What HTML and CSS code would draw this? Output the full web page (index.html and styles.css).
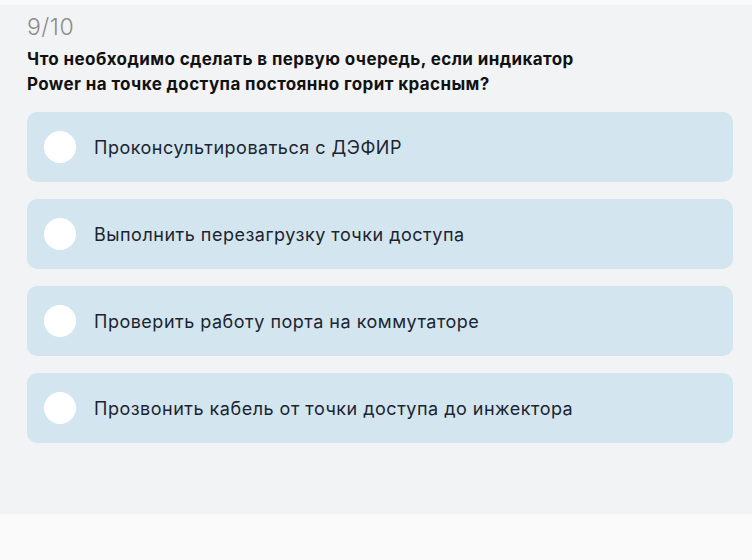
FILE: index.html
```html
<!DOCTYPE html>
<html lang="ru">
<head>
    <meta charset="UTF-8">
    <meta name="viewport" content="width=device-width, initial-scale=1.0">
    <title>Тест</title>
    <link rel="stylesheet" href="styles.css">
</head>
<body>
    <div class="quiz">
        <div class="counter">9/10</div>
        <h2 class="question">Что необходимо сделать в первую очередь, если индикатор<br>Power на точке доступа постоянно горит красным?</h2>

        <!-- Варианты ответа -->
        <div class="answers">
            <label class="answer"><span class="radio"></span><span class="answer-text">Проконсультироваться с ДЭФИР</span></label>
            <label class="answer"><span class="radio"></span><span class="answer-text">Выполнить перезагрузку точки доступа</span></label>
            <label class="answer"><span class="radio"></span><span class="answer-text">Проверить работу порта на коммутаторе</span></label>
            <label class="answer"><span class="radio"></span><span class="answer-text">Прозвонить кабель от точки доступа до инжектора</span></label>
        </div>
    </div>
</body>
</html>
```

FILE: styles.css
```css
:root {
    --page-bg: #fafafa;
    --panel-bg: #f2f3f5;
    --card-bg: #d3e6ef;
    --text-color: #1c2430;
    --muted-color: #8c8c8c;
}

body {
    margin: 0;
    padding: 5px 0 0;
    background: var(--page-bg);
    font-family: Inter, 'Noto Sans', sans-serif;
    color: var(--text-color);
}

.quiz {
    background: var(--panel-bg);
    height: 509px;
    padding: 10px 19px 0 27px;
    box-sizing: border-box;
}

.counter {
    font-size: 23px;
    font-weight: 300;
    letter-spacing: 0.5px;
    color: var(--muted-color);
    line-height: 24px;
}

.question {
    margin: 8px 0 0;
    font-size: 17px;
    font-weight: 700;
    letter-spacing: 0.4px;
    line-height: 25px;
    color: #111;
}

.answers {
    display: flex;
    flex-direction: column;
    gap: 17px;
    margin-top: 15px;
}

.answer {
    display: flex;
    align-items: center;
    height: 70px;
    padding-left: 17px;
    background: var(--card-bg);
    border-radius: 10px;
    cursor: pointer;
}

.radio {
    width: 32px;
    height: 32px;
    border-radius: 50%;
    background: #fff;
    flex-shrink: 0;
}

.answer-text {
    margin-left: 18px;
    font-size: 18px;
    font-weight: 400;
    letter-spacing: 0.5px;
}
```
